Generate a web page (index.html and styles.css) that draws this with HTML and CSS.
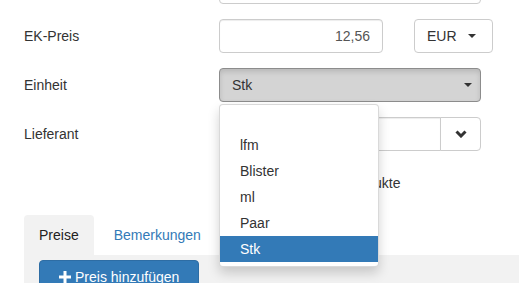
FILE: index.html
```html
<!DOCTYPE html>
<html lang="de">

<head>
  <meta charset="UTF-8" />
  <meta name="viewport" content="width=device-width, initial-scale=1.0" />
  <title>Artikel bearbeiten</title>
  <link rel="stylesheet" href="styles.css">
</head>

<body>
  <form class="form">
    <div class="row">
      <span class="label"></span>
      <div class="ctrl">
        <input class="field" type="text" />
      </div>
    </div>

    <div class="row">
      <label class="label">EK-Preis</label>
      <div class="ctrl ctrl-price">
        <input class="field field-price" type="text" value="12,56" />
        <button class="btn btn-currency" type="button">EUR <span class="caret"></span></button>
      </div>
    </div>

    <div class="row">
      <label class="label">Einheit</label>
      <div class="ctrl ctrl-select">
        <button class="btn btn-select" type="button">
          <span>Stk</span>
          <span class="caret"></span>
        </button>
        <ul class="dropdown">
          <li class="empty"></li>
          <li>lfm</li>
          <li>Blister</li>
          <li>ml</li>
          <li>Paar</li>
          <li class="selected">Stk</li>
        </ul>
      </div>
    </div>

    <div class="row">
      <label class="label">Lieferant</label>
      <div class="ctrl ctrl-group">
        <input class="field field-group" type="text" />
        <button class="btn btn-addon" type="button">
          <svg width="12" height="8" viewBox="0 0 12 8">
            <polyline points="1.5,1.5 6,6 10.5,1.5" fill="none" stroke="#333" stroke-width="3" />
          </svg>
        </button>
      </div>
    </div>

    <div class="row row-check">
      <span class="label"></span>
      <label class="check"><input type="checkbox" /> Preis gilt für alle Produkte</label>
    </div>
  </form>

  <ul class="tabs">
    <li class="active">Preise</li>
    <li><a href="#">Bemerkungen</a></li>
  </ul>
  <div class="panel">
    <button class="btn btn-primary" type="button">
      <svg width="12" height="12" viewBox="0 0 12 12">
        <path d="M4.5 0h3v4.5H12v3H7.5V12h-3V7.5H0v-3h4.5z" fill="#fff" />
      </svg>
      Preis hinzufügen
    </button>
  </div>
</body>

</html>
```

FILE: styles.css
```css
body {
  color: #333;
  font-family: "Liberation Sans", Arial, sans-serif;
  font-size: 14px;
  line-height: 20px;
  margin: 0;
  overflow: hidden;
}

.form {
  margin-top: -30px;
  padding-left: 24px;
}

.row {
  align-items: center;
  display: flex;
  height: 34px;
  margin-bottom: 15px;
}

.label {
  flex: none;
  width: 195px;
}

.ctrl {
  position: relative;
  width: 262px;
}

.field {
  border: 1px solid #ccc;
  border-radius: 4px;
  box-shadow: inset 0 1px 1px rgba(0, 0, 0, .075);
  box-sizing: border-box;
  color: #555;
  display: block;
  font: inherit;
  height: 34px;
  padding: 6px 12px;
  width: 100%;
}

.btn {
  background: #fff;
  border: 1px solid #ccc;
  border-radius: 4px;
  box-sizing: border-box;
  color: #333;
  font: inherit;
  height: 34px;
  line-height: 20px;
  padding: 6px 12px;
}

.caret {
  border-left: 4px solid transparent;
  border-right: 4px solid transparent;
  border-top: 4px solid #333;
  display: inline-block;
  height: 0;
  vertical-align: middle;
  width: 0;
}

/* EK-Preis */
.ctrl-price {
  display: flex;
  width: auto;
}

.field-price {
  text-align: right;
  width: 164px;
}

.btn-currency {
  margin-left: 31px;
  text-align: left;
  width: 79px;
}

.btn-currency .caret {
  margin-left: 8px;
  margin-top: -2px;
}

/* Einheit */
.btn-select {
  align-items: center;
  background: #d4d4d4;
  border-color: #8c8c8c;
  box-shadow: inset 0 3px 5px rgba(0, 0, 0, .125);
  display: flex;
  justify-content: space-between;
  padding-right: 8px;
  width: 100%;
}

.dropdown {
  background: #fff;
  border: 1px solid rgba(0, 0, 0, .15);
  border-radius: 4px;
  box-shadow: 0 6px 12px rgba(0, 0, 0, .175);
  box-sizing: border-box;
  left: 0;
  list-style: none;
  margin: 2px 0 0;
  padding: 1px 0 4px;
  position: absolute;
  top: 100%;
  width: 160px;
  z-index: 10;
}

.dropdown li {
  height: 20px;
  padding: 3px 20px;
}

.dropdown li.selected {
  background: #337ab7;
  color: #fff;
}

/* Lieferant */
.ctrl-group {
  display: flex;
}

.field-group {
  border-radius: 4px 0 0 4px;
  flex: 1;
}

.btn-addon {
  align-items: center;
  border-radius: 0 4px 4px 0;
  display: flex;
  justify-content: center;
  margin-left: -1px;
  padding: 0;
  width: 41px;
}

.row-check {
  align-items: flex-start;
  height: auto;
  margin-bottom: 22px;
  padding-top: 7px;
}

.check {
  padding-left: 22px;
  position: relative;
}

.check input {
  left: 0;
  margin: 4px 0 0;
  position: absolute;
}

/* Tabs */
.tabs {
  display: flex;
  gap: 5px;
  list-style: none;
  margin: 0 0 0 24px;
  padding: 0;
}

.tabs li {
  border-radius: 4px 4px 0 0;
  padding: 10px 15px;
}

.tabs li.active {
  background: #f2f2f2;
  color: #222;
}

.tabs a {
  color: #337ab7;
  text-decoration: none;
}

.panel {
  background: #f2f2f2;
  height: 60px;
  margin-left: 24px;
  padding: 5px 15px;
}

.btn-primary {
  align-items: center;
  background: #337ab7;
  border-color: #2e6da4;
  color: #fff;
  display: flex;
  gap: 4px;
  padding: 6px 19px;
}
```
